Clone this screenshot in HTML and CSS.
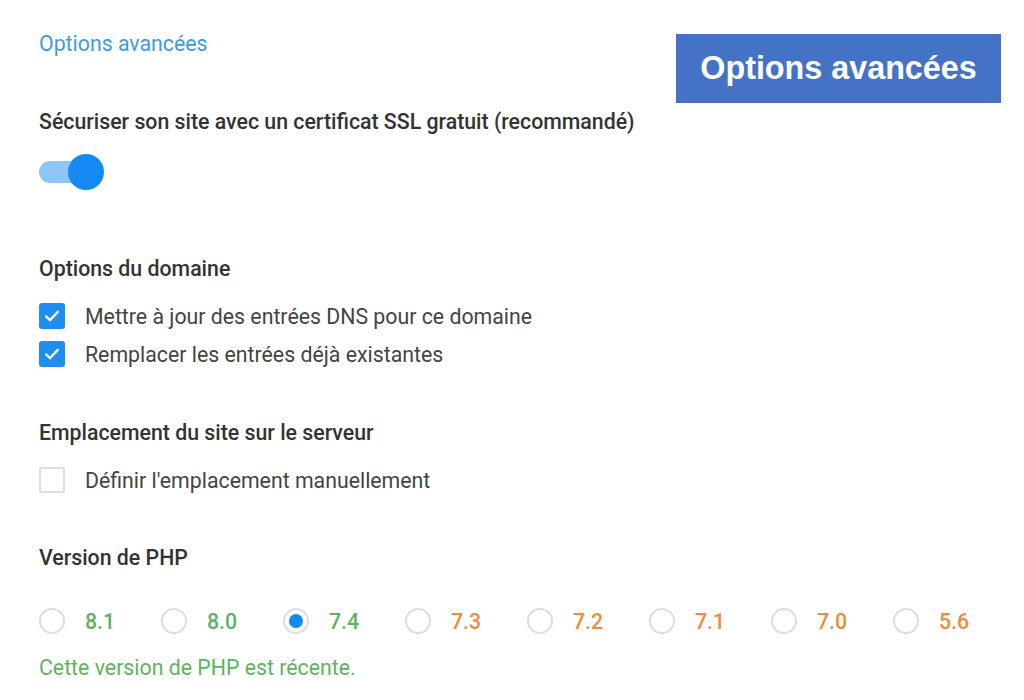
FILE: index.html
```html
<!DOCTYPE html>
<html lang="fr">
<head>
    <meta charset="UTF-8">
    <title>Options avancées</title>
    <link rel="stylesheet" href="styles.css">
</head>
<body>
    <div class="badge">Options avancées</div>

    <div class="panel">
        <a class="toggle-link" href="#">Options avancées</a>

        <div class="section ssl">
            <div class="section-title">Sécuriser son site avec un certificat SSL gratuit (recommandé)</div>
            <div class="switch">
                <span class="switch-track"></span>
                <span class="switch-knob"></span>
            </div>
        </div>

        <div class="section domain">
            <div class="section-title">Options du domaine</div>
            <label class="check-row">
                <span class="checkbox checked">
                    <svg viewBox="0 0 24 24" width="20" height="20"><path d="M5 12.5l4.5 4.5L19 7" fill="none" stroke="#fff" stroke-width="2.8" stroke-linecap="round" stroke-linejoin="round"/></svg>
                </span>
                Mettre à jour des entrées DNS pour ce domaine
            </label>
            <label class="check-row">
                <span class="checkbox checked">
                    <svg viewBox="0 0 24 24" width="20" height="20"><path d="M5 12.5l4.5 4.5L19 7" fill="none" stroke="#fff" stroke-width="2.8" stroke-linecap="round" stroke-linejoin="round"/></svg>
                </span>
                Remplacer les entrées déjà existantes
            </label>
        </div>

        <div class="section location">
            <div class="section-title">Emplacement du site sur le serveur</div>
            <label class="check-row">
                <span class="checkbox"></span>
                Définir l'emplacement manuellement
            </label>
        </div>

        <div class="section php">
            <div class="section-title">Version de PHP</div>
            <div class="radio-list">
                <label class="radio-item recent"><span class="radio"></span>8.1</label>
                <label class="radio-item recent"><span class="radio"></span>8.0</label>
                <label class="radio-item recent"><span class="radio selected"></span>7.4</label>
                <label class="radio-item old"><span class="radio"></span>7.3</label>
                <label class="radio-item old"><span class="radio"></span>7.2</label>
                <label class="radio-item old"><span class="radio"></span>7.1</label>
                <label class="radio-item old"><span class="radio"></span>7.0</label>
                <label class="radio-item old"><span class="radio"></span>5.6</label>
            </div>
            <p class="php-note">Cette version de PHP est récente.</p>
        </div>
    </div>
</body>
</html>
```

FILE: styles.css
```css
body {
    font-family: Roboto, "Noto Sans", Arial, sans-serif;
    margin: 0;
    padding: 0;
    background-color: #fff;
    color: #3a3a3a;
}

.panel {
    padding: 32px 0 0 39px;
}

.toggle-link {
    display: block;
    font-size: 21.3px;
    line-height: 24px;
    color: #3f9ae6;
    text-decoration: none;
}

.section-title {
    font-size: 21.3px;
    font-weight: 500;
    line-height: 24px;
    color: #333;
}

.ssl {
    margin-top: 54px;
}

/* toggle switch */
.switch {
    position: relative;
    width: 66px;
    height: 36px;
    margin-top: 20px;
}

.switch-track {
    position: absolute;
    left: 0;
    top: 7px;
    width: 56px;
    height: 22px;
    border-radius: 11px;
    background-color: #8ec5f8;
}

.switch-knob {
    position: absolute;
    left: 29px;
    top: 0;
    width: 36px;
    height: 36px;
    border-radius: 50%;
    background-color: #1289f3;
}

.domain {
    margin-top: 67px;
}

.check-row {
    display: flex;
    align-items: center;
    gap: 20px;
    height: 28px;
    font-size: 21.3px;
    color: #444;
}

.section-title + .check-row {
    margin-top: 21px;
}

.check-row + .check-row {
    margin-top: 10px;
}

.checkbox {
    display: flex;
    align-items: center;
    justify-content: center;
    box-sizing: border-box;
    width: 26px;
    height: 26px;
    border: 2px solid #ddd;
    border-radius: 3px;
    background-color: #fff;
}

.checkbox.checked {
    border: none;
    background-color: #1e8ff0;
}

.location {
    margin-top: 53px;
}

.php {
    margin-top: 52px;
}

.radio-list {
    display: flex;
    margin-top: 37px;
    height: 28px;
}

.radio-item {
    display: flex;
    align-items: center;
    gap: 20px;
    width: 122px;
    font-size: 21.3px;
    font-weight: 500;
}

.radio-item.recent {
    color: #5fb35f;
}

.radio-item.old {
    color: #ef8b3b;
}

.radio {
    display: flex;
    align-items: center;
    justify-content: center;
    box-sizing: border-box;
    width: 26px;
    height: 26px;
    border: 2px solid #ddd;
    border-radius: 50%;
}

.radio.selected::after {
    content: "";
    width: 14px;
    height: 14px;
    border-radius: 50%;
    background-color: #1289f3;
}

.php-note {
    margin: 21px 0 0;
    font-size: 21.3px;
    line-height: 24px;
    color: #5fb35f;
}

/* overlay label in the top right corner */
.badge {
    position: absolute;
    top: 34px;
    right: 23px;
    width: 325px;
    height: 69px;
    display: flex;
    align-items: center;
    justify-content: center;
    background-color: #4472c4;
    color: #fff;
    font-family: "Liberation Sans", Arial, sans-serif;
    font-size: 32.3px;
    font-weight: bold;
}
```
